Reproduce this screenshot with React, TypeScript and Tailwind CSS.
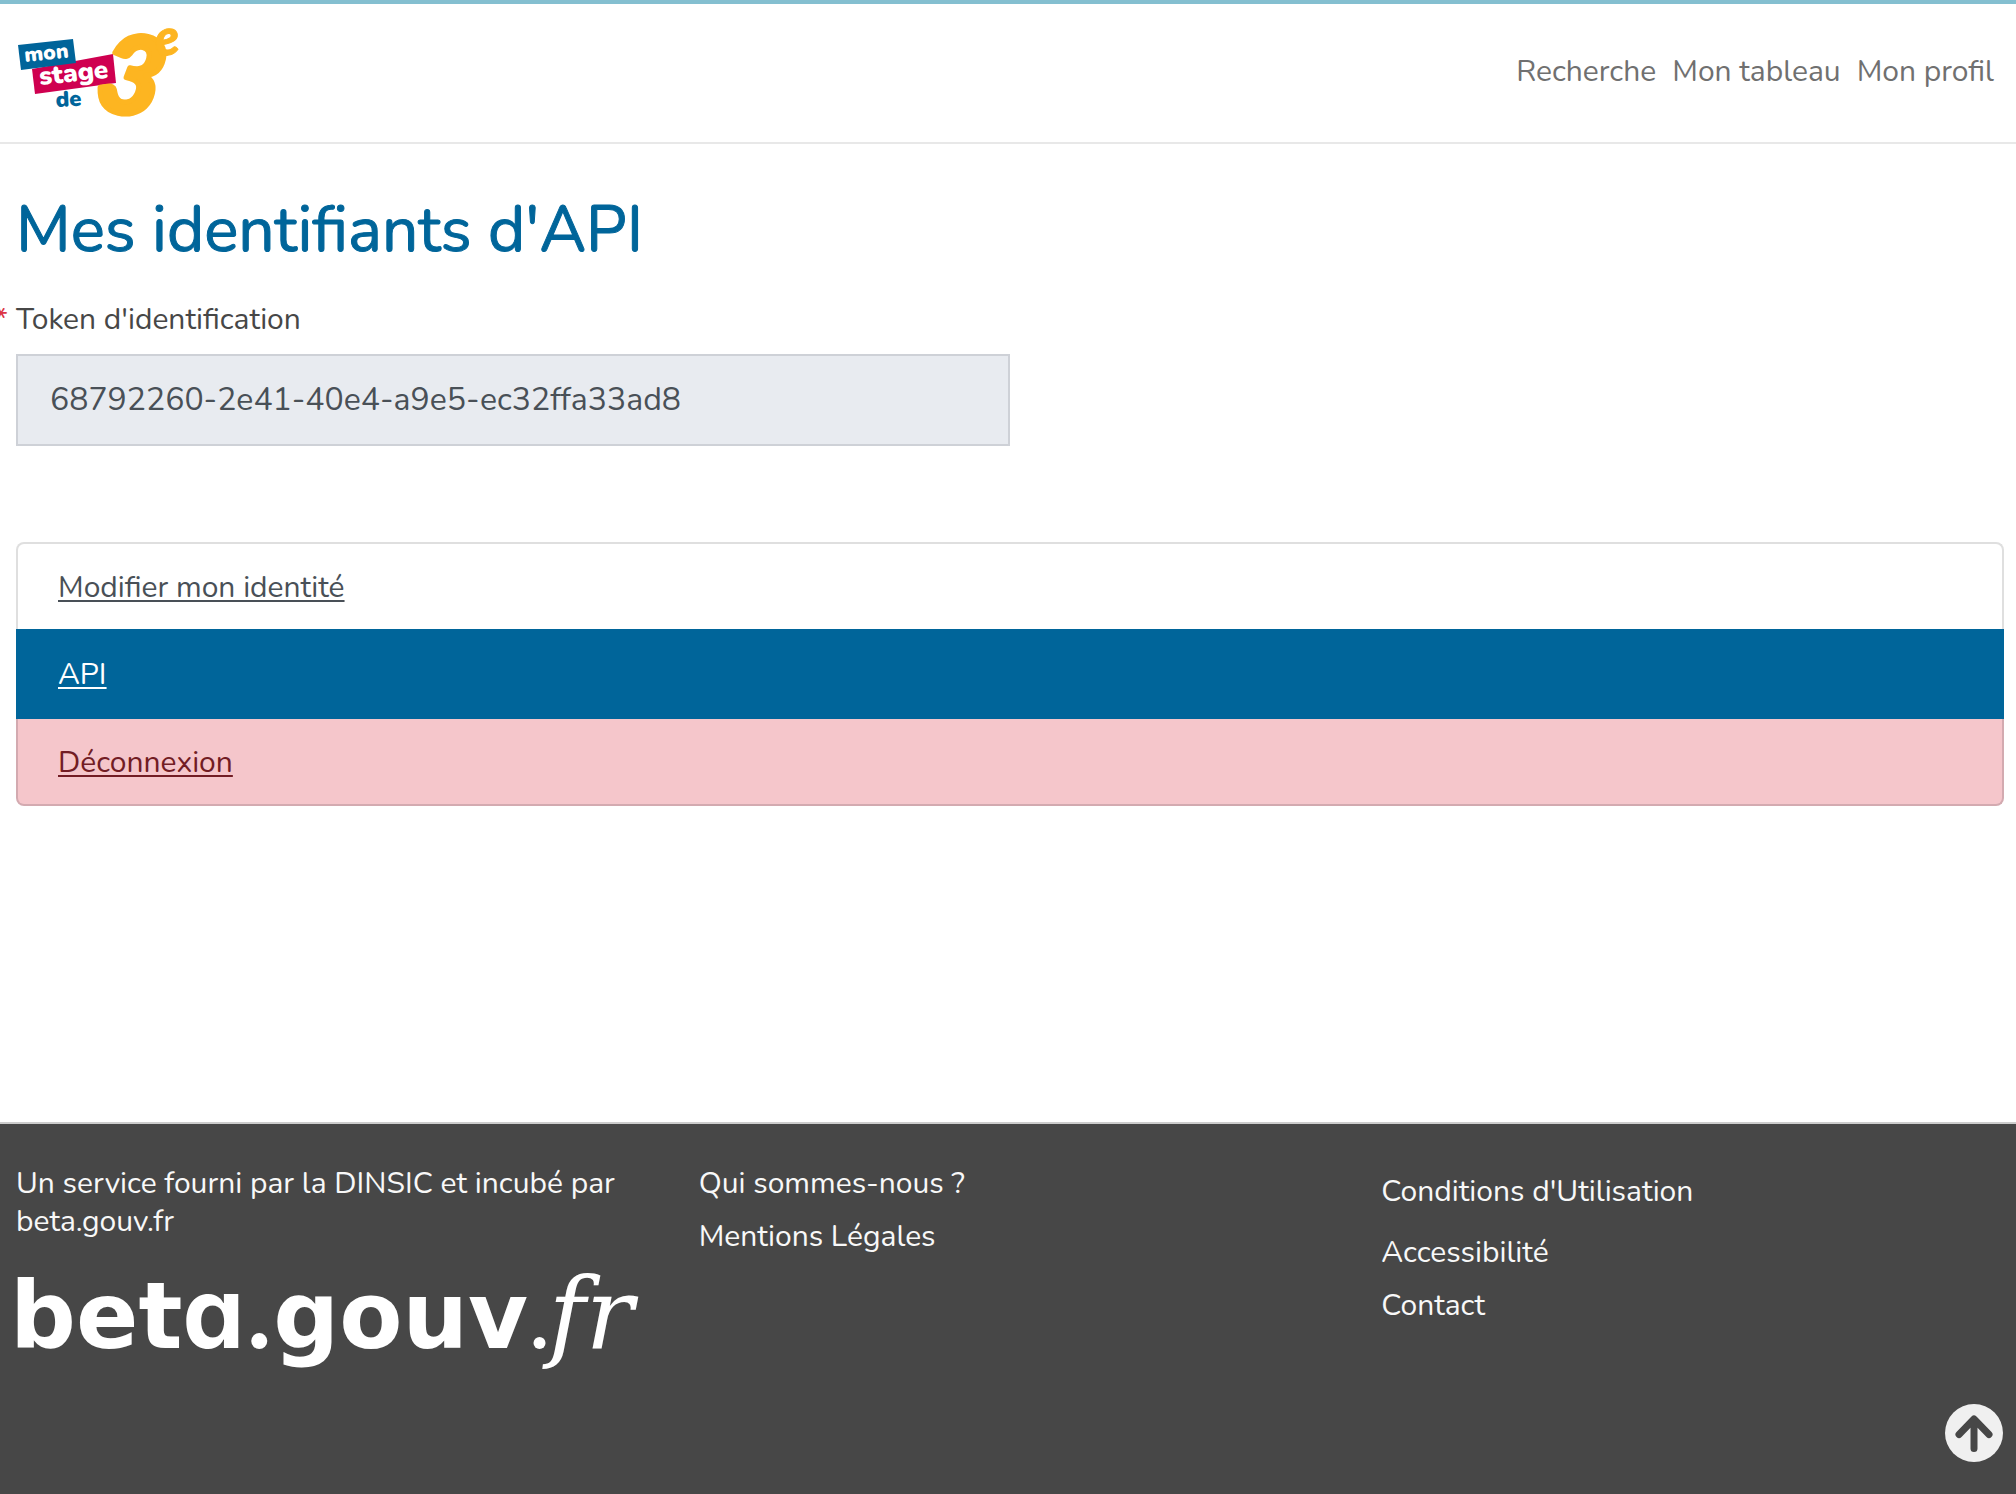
import React from "react";

const navLinks = ["Recherche", "Mon tableau", "Mon profil"];

function StageLogo() {
  return (
    <svg viewBox="0 0 164 96" className="h-24 w-41 overflow-visible" role="img" aria-label="Mon stage de 3e">
      <path d="M16 46 97 31l3 29-81 11Z" fill="#cf0050" />
      <path d="M2 22 57 16l3 24-55 7Z" fill="#00649a" />
      <g className="font-['Nunito','Lato',sans-serif] font-black">
        <text x="9" y="39" fontSize="21" fill="#fff" transform="rotate(-6 9 39)">mon</text>
        <text x="24" y="62" fontSize="26" fill="#fff" transform="rotate(-6 24 62)">stage</text>
        <text x="40" y="84" fontSize="22" fill="#00649a" transform="rotate(-3 40 84)">de</text>
      </g>
      <g className="font-['Lato',sans-serif] font-black italic" fill="#fdb521" stroke="#fdb521" strokeLinejoin="round">
        <text x="84" y="91" fontSize="110" strokeWidth="5" transform="rotate(13 114 52)">3</text>
        <text x="139" y="32" fontSize="50" strokeWidth="1" transform="rotate(-5 150 21)">e</text>
      </g>
    </svg>
  );
}

function BetaGouvLogo() {
  return (
    <svg viewBox="0 0 622 100" className="mt-[31px] w-full overflow-visible" role="img" aria-label="beta.gouv.fr" fill="#fff">
      <g className="font-['DejaVu_Sans',sans-serif] font-bold" fontSize="92">
        <text x="-6" y="76">
          bet
          <tspan className="font-['Inter',sans-serif] [font-feature-settings:'cv11']" fontSize="98">a</tspan>
        </text>
        <text x="257" y="76">gouv</text>
      </g>
      <circle cx="243" cy="69" r="8" />
      <circle cx="523" cy="71" r="6" />
      <text x="532" y="76" className="font-['DejaVu_Serif',serif] italic" fontSize="100">fr</text>
    </svg>
  );
}

export default function App() {
  return (
    <div className="flex min-h-screen flex-col overflow-x-hidden bg-white font-['Nunito','Lato',sans-serif] text-[30px] leading-[45px] text-[#474747]">
      <header className="flex h-36 items-center justify-between border-t-4 border-b-2 border-t-[#84bfd0] border-b-[#e8e8e8] pr-[22px] pb-1 pl-4">
        <a href="#accueil">
          <StageLogo />
        </a>
        <nav className="flex gap-4 text-[#707070]">
          {navLinks.map((label) => (
            <a key={label} href="#nav">{label}</a>
          ))}
        </nav>
      </header>

      <main className="pt-12 pr-3 pb-79 pl-4">
        <h1 className="text-[64px] leading-[77px] text-[#00659a] [-webkit-text-stroke:1px_#00659a]">Mes identifiants d'API</h1>
        <div className="mt-7 w-1/2">
          <label htmlFor="token" className="relative block">
            <span className="absolute right-full pr-2 text-[#dc3545]">*</span>
            Token d'identification
          </label>
          <input
            id="token"
            readOnly
            value="68792260-2e41-40e4-a9e5-ec32ffa33ad8"
            className="mt-3 block h-23 w-full border-2 border-[#ced1d7] bg-[#e8ebf0] px-8 pb-0.5 text-[32px] text-[#495057] outline-none"
          />
        </div>

        <ul className="mt-24">
          <li className="rounded-t-lg border-2 border-b-0 border-[#dfdfdf] px-10 pt-[21px] pb-[19px] text-[#495057]">
            <a href="#identite" className="underline decoration-2 underline-offset-3">Modifier mon identité</a>
          </li>
          <li className="flex h-[90px] items-center bg-[#00659a] px-[42px] text-white">
            <a href="#api" className="underline decoration-2 underline-offset-3">API</a>
          </li>
          <li className="rounded-b-lg border-2 border-t-0 border-[#d3aab0] bg-[#f5c6cb] px-10 pt-[21px] pb-[19px] text-[#721c24]">
            <a href="#deconnexion" className="underline decoration-2 underline-offset-3">Déconnexion</a>
          </li>
        </ul>
      </main>

      <footer className="grid flex-1 grid-cols-3 gap-15 border-t-2 border-[#cccccc] bg-[#474747] pt-[41px] pr-3 pb-8 pl-4 leading-[38px] text-[#f8f8f8]">
        <div>
          <p>Un service fourni par la DINSIC et incubé par beta.gouv.fr</p>
          <BetaGouvLogo />
        </div>
        <div className="flex flex-col items-start gap-[15px]">
          <a href="#qui">Qui sommes-nous ?</a>
          <a href="#mentions">Mentions Légales</a>
        </div>
        <div className="flex flex-col items-start gap-[15px] pt-2">
          <a href="#cgu" className="mb-2">Conditions d'Utilisation</a>
          <a href="#accessibilite">Accessibilité</a>
          <a href="#contact">Contact</a>
        </div>
      </footer>

      <button type="button" aria-label="Haut de page" className="fixed right-[13px] bottom-8 size-[58px] rounded-full bg-[#f0f0f0]">
        <svg viewBox="0 0 58 58" fill="none" stroke="#474747" strokeWidth="7" strokeLinecap="round" strokeLinejoin="round">
          <path d="M14 30.500 29 15l15 15.500M29 17v27.500" />
        </svg>
      </button>
    </div>
  );
}
